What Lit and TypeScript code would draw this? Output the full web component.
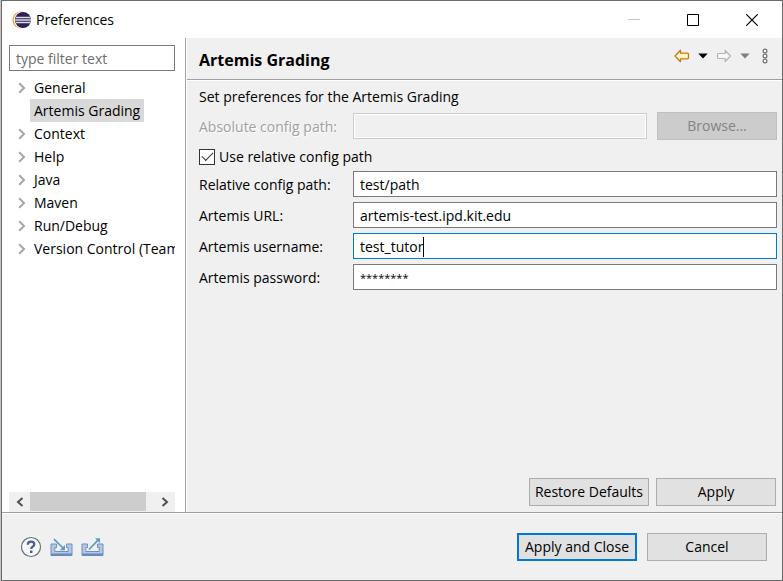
import { LitElement, html, css, svg, nothing } from "lit";
import { customElement, state } from "lit/decorators.js";
import { classMap } from "lit/directives/class-map.js";

interface TreeNode {
  label: string;
  leaf?: boolean;
}

const NODES: TreeNode[] = [
  { label: "General" },
  { label: "Artemis Grading", leaf: true },
  { label: "Context" },
  { label: "Help" },
  { label: "Java" },
  { label: "Maven" },
  { label: "Run/Debug" },
  { label: "Version Control (Team)" },
];

const FIELDS = [
  { id: "relative", label: "Relative config path:", value: "test/path" },
  { id: "url", label: "Artemis URL:", value: "artemis-test.ipd.kit.edu" },
  { id: "user", label: "Artemis username:", value: "test_tutor", active: true },
  { id: "password", label: "Artemis password:", value: "********", masked: true },
];

const appIcon = html`<svg width="20" height="20" viewBox="0 0 20 20" aria-hidden="true">
  <circle cx="9" cy="10" r="8.5" fill="#f7941e" />
  <circle cx="10.2" cy="10" r="8.5" fill="#fff" />
  <circle cx="11" cy="10" r="8" fill="#2c2255" />
  <path d="M4 7.5h14.5M3.2 10h16M4 12.5h14.5" stroke="#dcdae8" stroke-width="1.3" />
</svg>`;

const chevron = html`<svg class="chevron" width="8" height="12" viewBox="0 0 8 12" aria-hidden="true">
  <path d="M1.2 1.2 6 6 1.2 10.8" fill="none" stroke="#a6a6a6" stroke-width="2" />
</svg>`;

const arrow = (forward: boolean) => html`<svg width="16" height="14" viewBox="0 0 16 14" aria-hidden="true">
  ${forward
    ? svg`<path d="M14.5 7 9.2 1.5V4.5H2.5Q1.5 4.5 1.5 5.5V8.5Q1.5 9.5 2.5 9.5H9.2V12.5Z" fill="#f7f7f7" stroke="#b4b4b4" stroke-width="1.2" stroke-linejoin="round" />`
    : svg`<path d="M1 7 6.5 1.3V4.2H13.5Q14.5 4.2 14.5 5.2V8.8Q14.5 9.8 13.5 9.8H6.5V12.7Z" fill="#fff3c4" stroke="#c07f14" stroke-width="1.3" stroke-linejoin="round" />`}
</svg>`;

const caretDown = html`<svg width="10" height="6" viewBox="0 0 10 6" aria-hidden="true">
  <path d="M0.3 0.5H9.7L5 5.5Z" fill="currentColor" />
</svg>`;

const scrollArrow = (path: string) => html`<svg width="8" height="10" viewBox="0 0 8 10" aria-hidden="true">
  <path d=${path} fill="none" stroke="#505050" stroke-width="2" />
</svg>`;

const helpIcon = html`<svg width="22" height="22" viewBox="0 0 22 22" aria-hidden="true">
  <circle cx="11" cy="11" r="9.5" fill="#f7f9fb" stroke="#66707f" stroke-width="1.2" />
  <path d="M7.8 8.8Q7.8 5.6 11.1 5.6 14.3 5.6 14.3 8.3 14.3 9.8 12.6 10.8 11.2 11.6 11.2 13.1" fill="none" stroke="#4b5e8c" stroke-width="2.3" />
  <rect x="10" y="14.5" width="2.5" height="2.5" fill="#4b5e8c" />
</svg>`;

const tray = (outward: boolean) => html`<svg width="23" height="20" viewBox="0 0 23 20" aria-hidden="true">
  <path d="M1 7H6.5V10.5H4.8V14.5H18.2V10.5H16.5V7H22V18.5H1Z" fill="#b3c7e6" stroke="#6e8fc3" stroke-width="1" />
  <path d="M1 16.5H22V18.8H1Z" fill="#6889be" />
  ${outward
    ? svg`<path d="M8 12.5 17 3.2" stroke="#5a9cc4" stroke-width="1.7" /><path d="M14 1.2H19V6.2Z" fill="#5a9cc4" />`
    : svg`<path d="M4 2.2 13 11" stroke="#5a9cc4" stroke-width="1.7" /><path d="M15 8V13.2H9.8Z" fill="#5a9cc4" />`}
</svg>`;

@customElement("app-root")
export class AppRoot extends LitElement {
  @state() private selected = "Artemis Grading";
  @state() private relative = true;

  static styles = css`
    :host {
      display: block;
      font: 14px/20px "Open Sans", "Noto Sans", sans-serif;
      color: #000;
      background: #c4c4c4;
      padding-left: 1px;
    }
    * {
      box-sizing: border-box;
    }
    button,
    input {
      font: inherit;
      color: inherit;
      margin: 0;
      padding: 0;
    }
    svg {
      display: block;
      flex: none;
    }
    .window {
      display: flex;
      flex-direction: column;
      min-height: 100vh;
      border: 1px solid #6a6a6a;
      background: #f0f0f0;
    }
    .titlebar {
      display: flex;
      align-items: center;
      height: 37px;
      padding: 0 1px 0 10px;
      background: #fff;
    }
    .caption {
      flex: 1;
      margin-left: 4px;
    }
    .icon-button {
      display: flex;
      align-items: center;
      justify-content: center;
      border: 0;
      background: none;
    }
    .system {
      width: 59px;
      height: 37px;
    }
    .body {
      flex: 1;
      display: flex;
      border-bottom: 1px solid #a0a0a0;
    }
    .sidebar {
      display: flex;
      flex-direction: column;
      width: 184px;
      flex: none;
      padding: 7px 10px 0 7px;
      background: #fff;
      border-right: 1px solid #a0a0a0;
    }
    .filter {
      width: 100%;
      height: 26px;
      padding: 0 6px;
      border: 1px solid #7a7a7a;
      background: #fff;
    }
    .filter::placeholder {
      color: #6d6d6d;
      opacity: 1;
    }
    .tree {
      flex: 1;
      list-style: none;
      margin: 5px 0 0;
      padding: 0;
      overflow: hidden;
      white-space: nowrap;
    }
    .node {
      display: flex;
      align-items: center;
      height: 23px;
      cursor: default;
    }
    .twisty {
      width: 21px;
      flex: none;
      padding-left: 9px;
    }
    .node-label {
      padding: 0 4px;
      line-height: 23px;
    }
    .node-label.selected {
      background: #d9d9d9;
    }
    .scrollbar {
      display: flex;
      height: 20px;
      background: #f0f0f0;
    }
    .scroll-step {
      width: 21px;
    }
    .track {
      flex: 1;
    }
    .thumb {
      width: 116px;
      height: 19px;
      background: #cdcdcd;
    }
    .page {
      flex: 1;
      min-width: 0;
      display: flex;
      flex-direction: column;
      border-left: 1px solid #fff;
    }
    .page-header {
      display: flex;
      align-items: center;
      height: 42px;
      padding: 0 14px 0 12px;
      border-bottom: 1px solid #a0a0a0;
      box-shadow: 0 1px #fff;
    }
    h1 {
      flex: 1;
      margin: 2px 0 0;
      font-size: 16px;
      line-height: 24px;
      font-weight: 700;
    }
    .toolbar {
      display: flex;
      align-items: center;
      gap: 8px;
      padding-bottom: 6px;
    }
    .menu {
      margin-left: 4px;
    }
    .muted {
      color: #808080;
    }
    .form {
      flex: 1;
      display: grid;
      grid-template-columns: 144px minmax(0, 1fr) 120px;
      align-content: start;
      align-items: center;
      gap: 5px 10px;
      padding: 7px 5px 0 12px;
    }
    .form label {
      padding-top: 2px;
    }
    .wide {
      grid-column: 1 / -1;
      margin: 0;
    }
    .off {
      color: #a0a0a0;
      text-shadow: 1px 1px #fff;
    }
    .check {
      display: flex;
      align-items: center;
      gap: 4px;
      height: 21px;
    }
    .check input {
      appearance: none;
      display: grid;
      place-content: center;
      width: 16px;
      height: 16px;
      border: 1px solid #333;
      background: #fff;
    }
    .check input:checked::before {
      content: "";
      width: 10px;
      height: 5px;
      margin-bottom: 3px;
      border: solid #333;
      border-width: 0 0 1px 1px;
      transform: rotate(-45deg);
    }
    .field {
      display: flex;
      align-items: center;
      grid-column: 2 / -1;
      height: 26px;
      padding: 1px 6px 0;
      border: 1px solid #7a7a7a;
      background: #fff;
      cursor: text;
    }
    .field input {
      width: 100%;
      border: 0;
      outline: 0;
      background: none;
    }
    .field.active {
      border-color: #0078d7;
    }
    .field.active input {
      width: auto;
      field-sizing: content;
      caret-color: transparent;
    }
    .field.masked input {
      font-size: 11px;
    }
    .field.disabled {
      grid-column: 2;
      border-color: #ccc;
      background: #f0f0f0;
      box-shadow: inset 0 0 0 1px #fff;
    }
    .caret {
      width: 1px;
      height: 20px;
      background: #000;
    }
    .push {
      width: 120px;
      height: 28px;
      border: 1px solid #adadad;
      background: #e1e1e1;
      white-space: nowrap;
    }
    .push:disabled {
      border-color: #bfbfbf;
      background: #ccc;
      color: #838383;
    }
    .push.default {
      border: 2px solid #0078d7;
    }
    .actions {
      display: flex;
      justify-content: flex-end;
      gap: 7px;
      padding: 0 6px 6px;
    }
    .footer {
      display: flex;
      align-items: center;
      height: 67px;
      padding: 0 15px 0 18px;
      border-top: 1px solid #fff;
    }
    .tools {
      flex: 1;
      display: flex;
      align-items: center;
      gap: 8px;
    }
    .confirm {
      display: flex;
      gap: 10px;
    }
  `;

  private renderNode(node: TreeNode) {
    const selected = node.label === this.selected;
    return html`<li class="node" role="treeitem" aria-selected=${selected} @click=${() => (this.selected = node.label)}>
      <span class="twisty">${node.leaf ? nothing : chevron}</span>
      <span class=${classMap({ "node-label": true, selected })}>${node.label}</span>
    </li>`;
  }

  render() {
    return html`
      <div class="window">
        <header class="titlebar">
          ${appIcon}
          <span class="caption">Preferences</span>
          <button class="icon-button system" aria-label="Minimize" disabled>
            <svg width="12" height="12" viewBox="0 0 12 12"><path d="M0 5.5H12" stroke="#c4c4c4" /></svg>
          </button>
          <button class="icon-button system" aria-label="Maximize">
            <svg width="12" height="12" viewBox="0 0 12 12"><path d="M.5.5H11.5V11.5H.5Z" fill="none" stroke="#000" /></svg>
          </button>
          <button class="icon-button system" aria-label="Close">
            <svg width="12" height="12" viewBox="0 0 12 12"><path d="M.3.3 11.7 11.7M11.7.3.3 11.7" stroke="#000" stroke-width="1.2" /></svg>
          </button>
        </header>

        <div class="body">
          <nav class="sidebar">
            <input class="filter" type="text" placeholder="type filter text" aria-label="Filter preferences" />
            <ul class="tree" role="tree">
              ${NODES.map((n) => this.renderNode(n))}
            </ul>
            <div class="scrollbar">
              <button class="icon-button scroll-step" aria-label="Scroll left">${scrollArrow("M6.5 1 2 5 6.5 9")}</button>
              <div class="track"><div class="thumb"></div></div>
              <button class="icon-button scroll-step" aria-label="Scroll right">${scrollArrow("M1.5 1 6 5 1.5 9")}</button>
            </div>
          </nav>

          <main class="page">
            <div class="page-header">
              <h1>Artemis Grading</h1>
              <div class="toolbar">
                <button class="icon-button" aria-label="Back">${arrow(false)}</button>
                <button class="icon-button" aria-label="Back history">${caretDown}</button>
                <button class="icon-button" aria-label="Forward">${arrow(true)}</button>
                <button class="icon-button muted" aria-label="Forward history">${caretDown}</button>
                <button class="icon-button menu" aria-label="View menu">
                  <svg width="6" height="16" viewBox="0 0 6 16">
                    <g fill="#fff" stroke="#707070" stroke-width="1.2">
                      <circle cx="3" cy="3" r="1.9" /><circle cx="3" cy="8" r="1.9" /><circle cx="3" cy="13" r="1.9" />
                    </g>
                  </svg>
                </button>
              </div>
            </div>

            <div class="form">
              <p class="wide">Set preferences for the Artemis Grading</p>
              <label class="off" for="absolute">Absolute config path:</label>
              <div class="field disabled"><input id="absolute" type="text" disabled /></div>
              <button class="push" disabled>Browse...</button>
              <label class="wide check">
                <input
                  type="checkbox"
                  .checked=${this.relative}
                  @change=${(e: Event) => (this.relative = (e.target as HTMLInputElement).checked)}
                />
                Use relative config path
              </label>
              ${FIELDS.map(
                (f) => html`
                  <label for=${f.id}>${f.label}</label>
                  <div class=${classMap({ field: true, active: !!f.active, masked: !!f.masked })}>
                    <input id=${f.id} type="text" autocomplete="off" spellcheck="false" .value=${f.value} />
                    ${f.active ? html`<span class="caret"></span>` : nothing}
                  </div>
                `
              )}
            </div>

            <div class="actions">
              <button class="push">Restore Defaults</button>
              <button class="push">Apply</button>
            </div>
          </main>
        </div>

        <footer class="footer">
          <div class="tools">
            <button class="icon-button" aria-label="Help">${helpIcon}</button>
            <button class="icon-button" aria-label="Import preferences">${tray(false)}</button>
            <button class="icon-button" aria-label="Export preferences">${tray(true)}</button>
          </div>
          <div class="confirm">
            <button class="push default">Apply and Close</button>
            <button class="push">Cancel</button>
          </div>
        </footer>
      </div>
    `;
  }
}
